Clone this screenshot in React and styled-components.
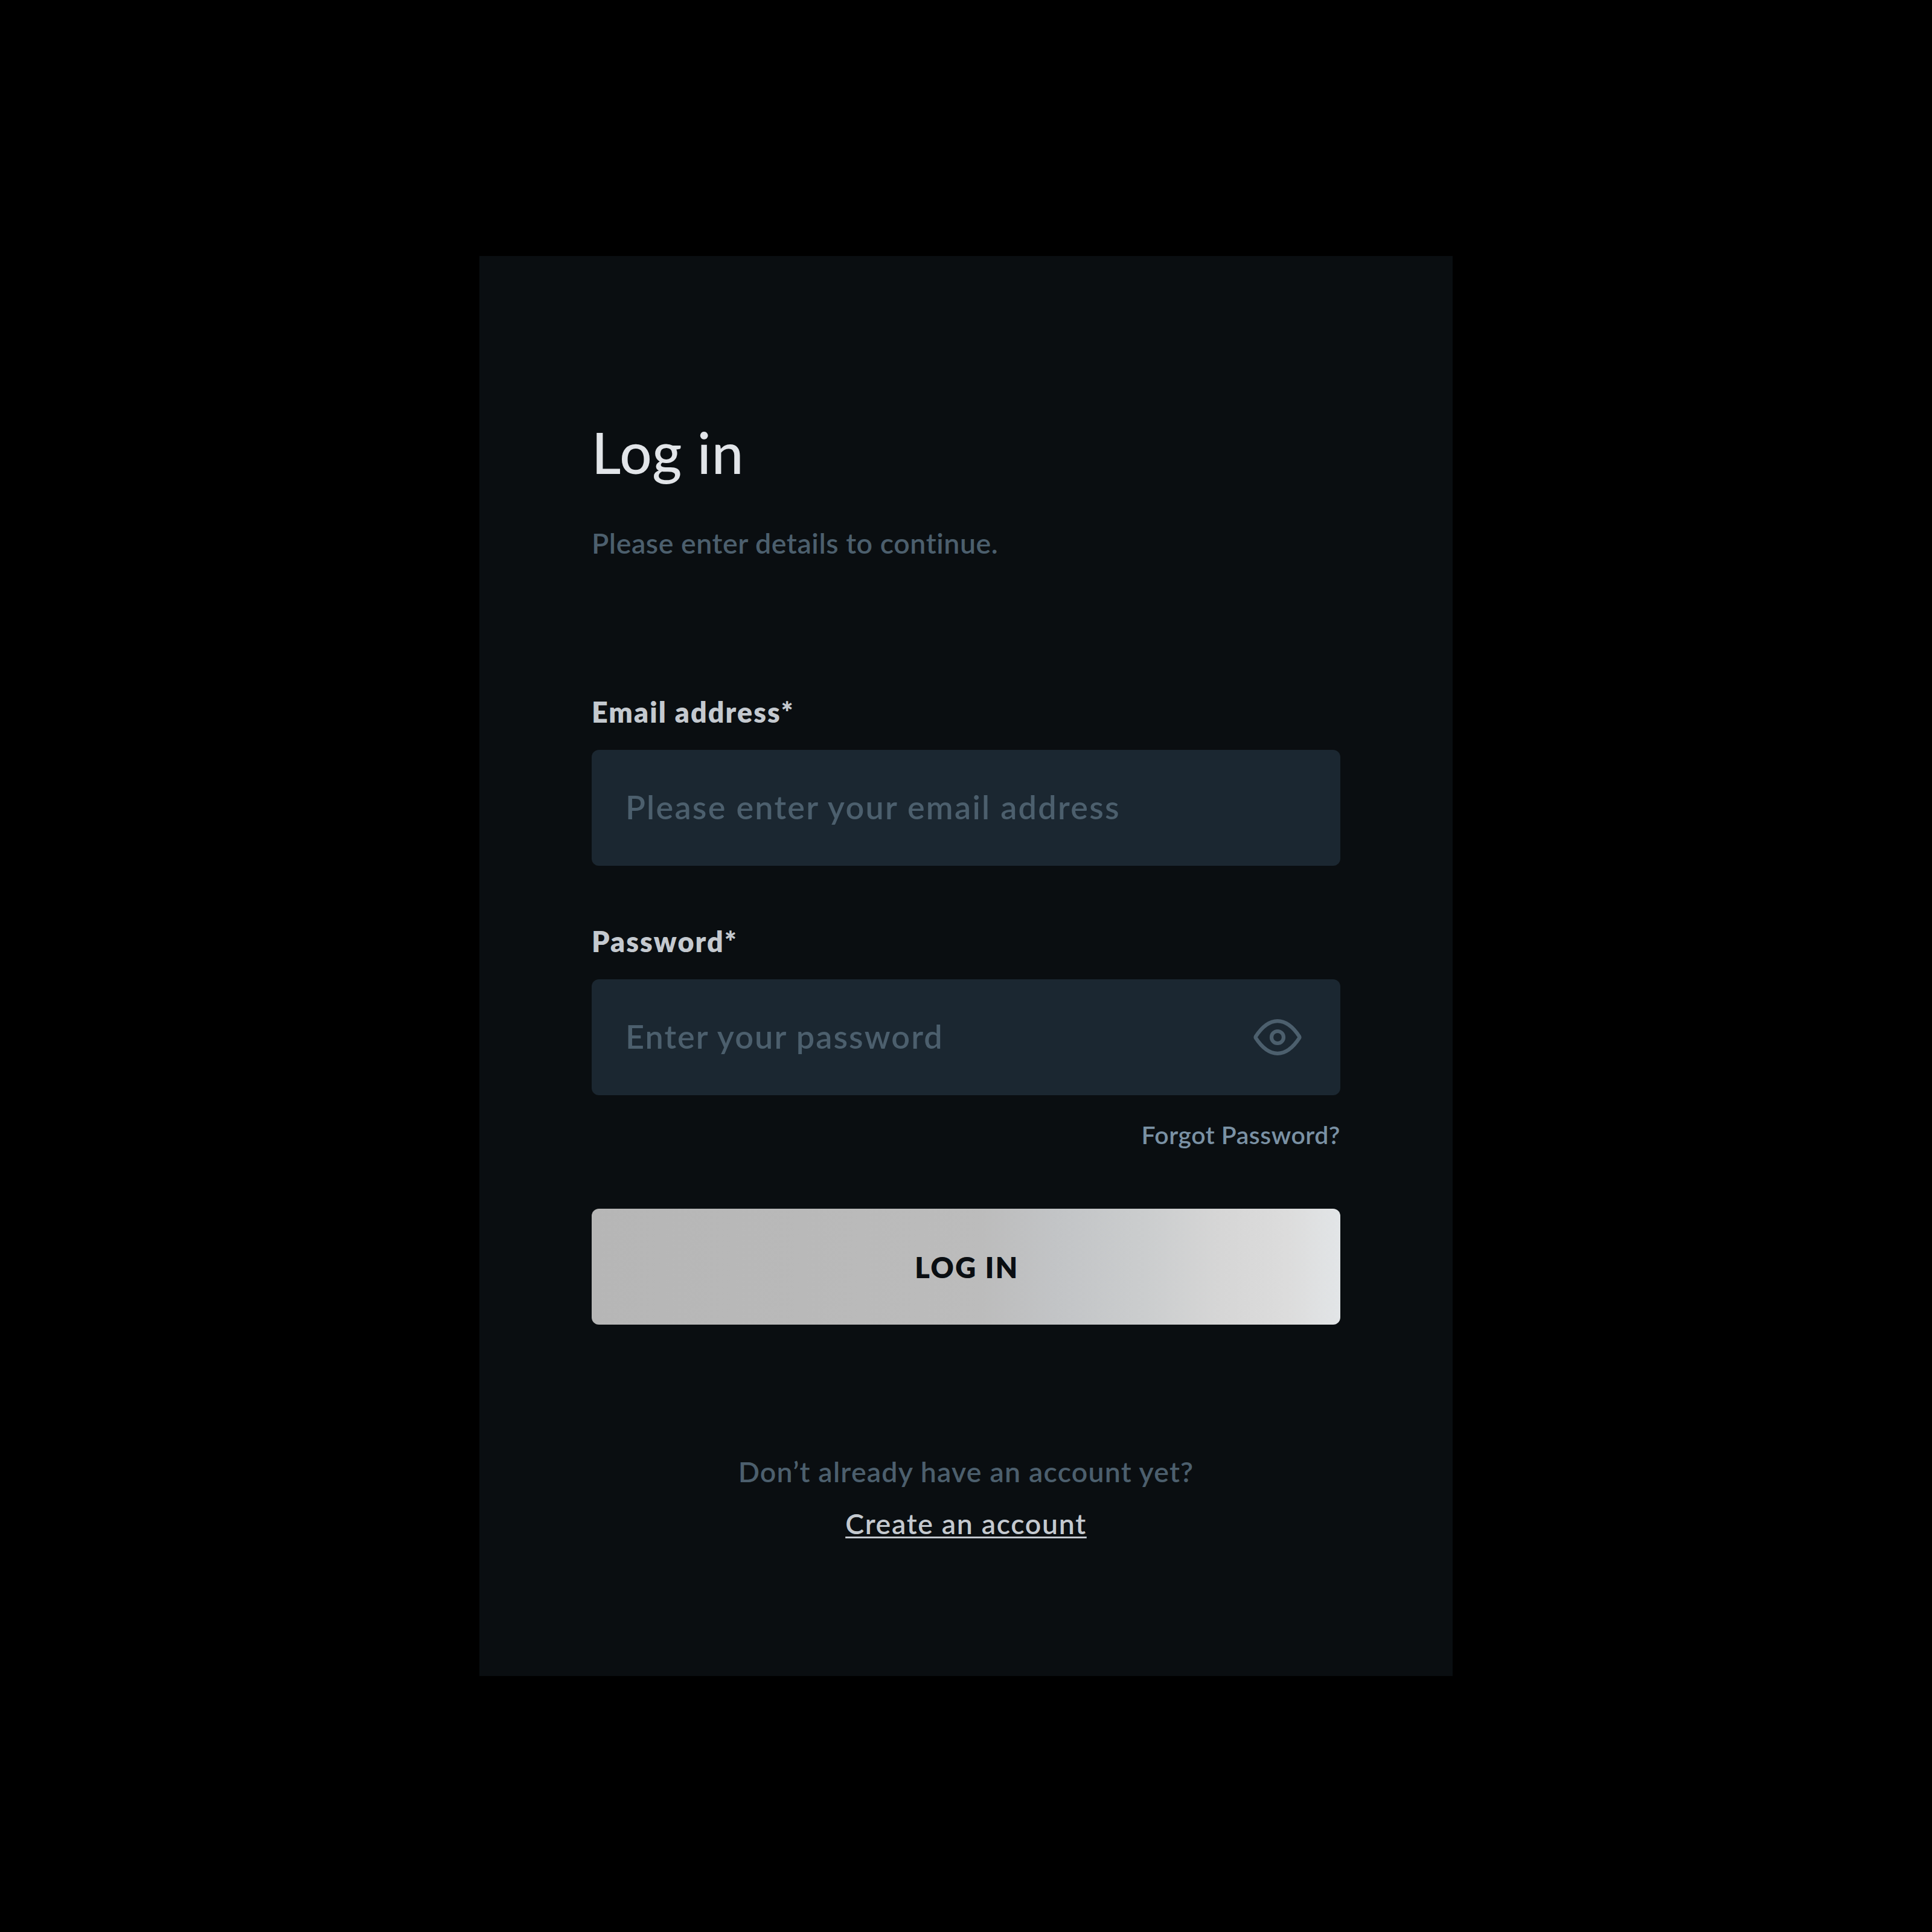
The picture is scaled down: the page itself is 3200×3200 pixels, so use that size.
import React, { useState } from "react";
import styled, { createGlobalStyle } from "styled-components";

const EyeIcon = () => (
  <svg width="80" height="60" viewBox="0 0 80 60" fill="none">
    <path
      d="M3.9 28.8C12 16.5 24.5 3.2 40 3.2S68 16.5 76.1 28.8Q76.8 30 76.1 31.2C68 43.5 55.5 56.8 40 56.8S12 43.5 3.9 31.2Q3.2 30 3.9 28.8Z"
      stroke="currentColor"
      strokeWidth="6.2"
      strokeLinejoin="round"
    />
    <circle cx="40" cy="30" r="10" stroke="currentColor" strokeWidth="6.2" />
  </svg>
);

const App = () => {
  const [email, setEmail] = useState("");
  const [password, setPassword] = useState("");
  const [visible, setVisible] = useState(false);

  return (
    <Page>
      <GlobalStyle />
      <LoginCard onSubmit={(e) => e.preventDefault()}>
        <Title>Log in</Title>
        <SubTitle>Please enter details to continue.</SubTitle>

        <Field $top={224}>
          <Label htmlFor="email">Email address*</Label>
          <InputBox>
            <Input
              id="email"
              type="text"
              placeholder="Please enter your email address"
              value={email}
              onChange={(e) => setEmail(e.target.value)}
            />
          </InputBox>
        </Field>

        <Field $top={96}>
          <Label htmlFor="password">Password*</Label>
          <InputBox>
            <Input
              id="password"
              type={visible ? "text" : "password"}
              placeholder="Enter your password"
              $spacing={2.05}
              value={password}
              onChange={(e) => setPassword(e.target.value)}
            />
            <EyeBtn type="button" onClick={() => setVisible(!visible)}>
              <EyeIcon />
            </EyeBtn>
          </InputBox>
        </Field>
        <ForgotLink href="#">Forgot Password?</ForgotLink>

        <LoginBtn type="submit">LOG IN</LoginBtn>

        <SignUp>
          <SignUpText>Don’t already have an account yet?</SignUpText>
          <SignUpLink href="#">Create an account</SignUpLink>
        </SignUp>
      </LoginCard>
    </Page>
  );
};

export default App;

const GlobalStyle = createGlobalStyle`
  * {
    box-sizing: border-box;
  }
  body {
    margin: 0;
    background-color: #000;
    font-family: "Lato", "Open Sans", sans-serif;
  }
`;
const Page = styled.div`
  min-height: 100vh;
  display: flex;
  align-items: center;
  justify-content: center;
`;
const LoginCard = styled.form`
  width: 1612px;
  height: 2352px;
  padding: 269px 186px 0;
  display: flex;
  flex-direction: column;
  background-color: #0a0e11;
`;
const Title = styled.h1`
  margin: 0;
  color: #e2e5e9;
  font-size: 94px;
  font-weight: 500;
  line-height: 112px;
  letter-spacing: 0.9px;
`;
const SubTitle = styled.p`
  margin: 66px 0 0;
  color: #4c5f6d;
  font-size: 46.5px;
  font-weight: 600;
  line-height: 56px;
  letter-spacing: 0.55px;
`;
const Field = styled.div`
  margin-top: ${({ $top }) => $top}px;
  display: flex;
  flex-direction: column;
  gap: 35px;

  & + & {
    margin-top: ${({ $top }) => $top + 1}px;
  }
`;
const Label = styled.label`
  color: #c4c9cf;
  font-size: 46.5px;
  font-weight: 800;
  line-height: 56px;
  letter-spacing: 2.1px;
`;
const InputBox = styled.div`
  height: 192px;
  padding: 0 64px 0 56px;
  display: flex;
  align-items: center;
  border-radius: 12px;
  background-color: #1b2731;
`;
const Input = styled.input`
  flex: 1;
  min-width: 0;
  height: 100%;
  padding: 0 0 4px;
  border: 0;
  outline: 0;
  background: transparent;
  color: #c4c9cf;
  font-family: inherit;
  font-size: 54px;
  font-weight: 600;
  letter-spacing: ${({ $spacing }) => $spacing || 2.28}px;

  &::placeholder {
    color: #4c5f6d;
    opacity: 1;
  }
`;
const EyeBtn = styled.button`
  display: flex;
  padding: 0;
  border: 0;
  background: transparent;
  color: #4c5f6d;
  cursor: pointer;
`;
const ForgotLink = styled.a`
  align-self: flex-end;
  margin-top: 42px;
  color: #7a91a4;
  font-size: 41px;
  font-weight: 600;
  line-height: 48px;
  letter-spacing: 0.5px;
  text-decoration: none;
`;
const LoginBtn = styled.button`
  height: 192px;
  margin-top: 98px;
  padding: 1px 0 0 3px;
  border: 0;
  border-radius: 12px;
  background: linear-gradient(
    90deg,
    #b6b6b6 0%,
    #b9b9b9 28%,
    #bcbcbc 52%,
    #c2c4c6 62%,
    #cbcdce 74%,
    #d6d6d6 84%,
    #dcdcdc 93%,
    #e2e5e7 100%
  );
  color: #0a0e12;
  font-family: inherit;
  font-size: 47px;
  font-weight: 800;
  letter-spacing: 2.4px;
  cursor: pointer;
`;
const SignUp = styled.div`
  margin-top: 215px;
  display: flex;
  flex-direction: column;
  align-items: center;
  gap: 30px;
  font-size: 46.5px;
  font-weight: 600;
  line-height: 56px;
`;
const SignUpText = styled.span`
  color: #4c5f6d;
  letter-spacing: 1.18px;
`;
const SignUpLink = styled.a`
  color: #c4c9cf;
  letter-spacing: 1.65px;
  text-decoration: underline;
  text-decoration-thickness: 3px;
  text-underline-offset: 4px;
`;
